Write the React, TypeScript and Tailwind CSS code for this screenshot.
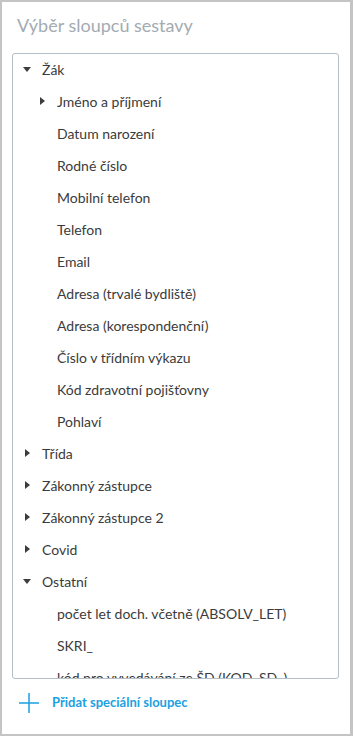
import React from "react";

const font = { fontFamily: '"Source Sans Pro", Lato, "Liberation Sans", sans-serif' };

function CaretDown() {
  return (
    <svg width="8" height="5" viewBox="0 0 8 5" className="shrink-0">
      <path d="M0 0 L8 0 L4 5 Z" fill="#3d3d3d" />
    </svg>
  );
}
function CaretRight() {
  return (
    <svg width="5" height="8" viewBox="0 0 5 8" className="shrink-0">
      <path d="M0 0 L5 4 L0 8 Z" fill="#3d3d3d" />
    </svg>
  );
}

type Row = { label: string; level: number; caret?: "down" | "right" };

const rows: Row[] = [
  { label: "Žák", level: 0, caret: "down" },
  { label: "Jméno a příjmení", level: 1, caret: "right" },
  { label: "Datum narození", level: 1 },
  { label: "Rodné číslo", level: 1 },
  { label: "Mobilní telefon", level: 1 },
  { label: "Telefon", level: 1 },
  { label: "Email", level: 1 },
  { label: "Adresa (trvalé bydliště)", level: 1 },
  { label: "Adresa (korespondenční)", level: 1 },
  { label: "Číslo v třídním výkazu", level: 1 },
  { label: "Kód zdravotní pojišťovny", level: 1 },
  { label: "Pohlaví", level: 1 },
  { label: "Třída", level: 0, caret: "right" },
  { label: "Zákonný zástupce", level: 0, caret: "right" },
  { label: "Zákonný zástupce 2", level: 0, caret: "right" },
  { label: "Covid", level: 0, caret: "right" },
  { label: "Ostatní", level: 0, caret: "down" },
  { label: "počet let doch. včetně (ABSOLV_LET)", level: 1 },
  { label: "SKRI_", level: 1 },
  { label: "kód pro vyvedávání ze ŠD (KOD_SD_)", level: 1 },
];

export default function App() {
  return (
    <div
      className="w-[353px] h-[736px] bg-white border-2 border-r-[3px] border-[#c4c4c4] flex flex-col"
      style={font}
    >
      <div className="h-[51px] pl-[15px] pt-[11px] text-[18px] leading-[24px] text-[#a3abb3] shrink-0">
        Výběr sloupců sestavy
      </div>
      <div className="ml-[10px] mr-[11px] h-[626px] border border-[#b4bec6] rounded-[3px] overflow-hidden shrink-0">
        {rows.map((r, i) => (
          <div
            key={i}
            className="h-[32px] pb-[2px] flex items-center text-[14px] text-[#3b3b3b] whitespace-nowrap"
            style={{ paddingLeft: r.level === 0 ? 9 : 24 }}
          >
            <div className="w-[10px] mr-[10px] flex items-center justify-center shrink-0">
              {r.caret === "down" && <CaretDown />}
              {r.caret === "right" && <CaretRight />}
            </div>
            <span>{r.label}</span>
          </div>
        ))}
      </div>
      <div className="flex items-center pl-[17px] pt-[14px] gap-[13px]">
        <svg width="20" height="20" viewBox="0 0 20 20" className="shrink-0">
          <path d="M10 0 V20 M0 10 H20" stroke="#1ba1e2" strokeWidth="1.5" />
        </svg>
        <span className="text-[13px] font-bold text-[#1ba1e2]">Přidat speciální sloupec</span>
      </div>
    </div>
  );
}
